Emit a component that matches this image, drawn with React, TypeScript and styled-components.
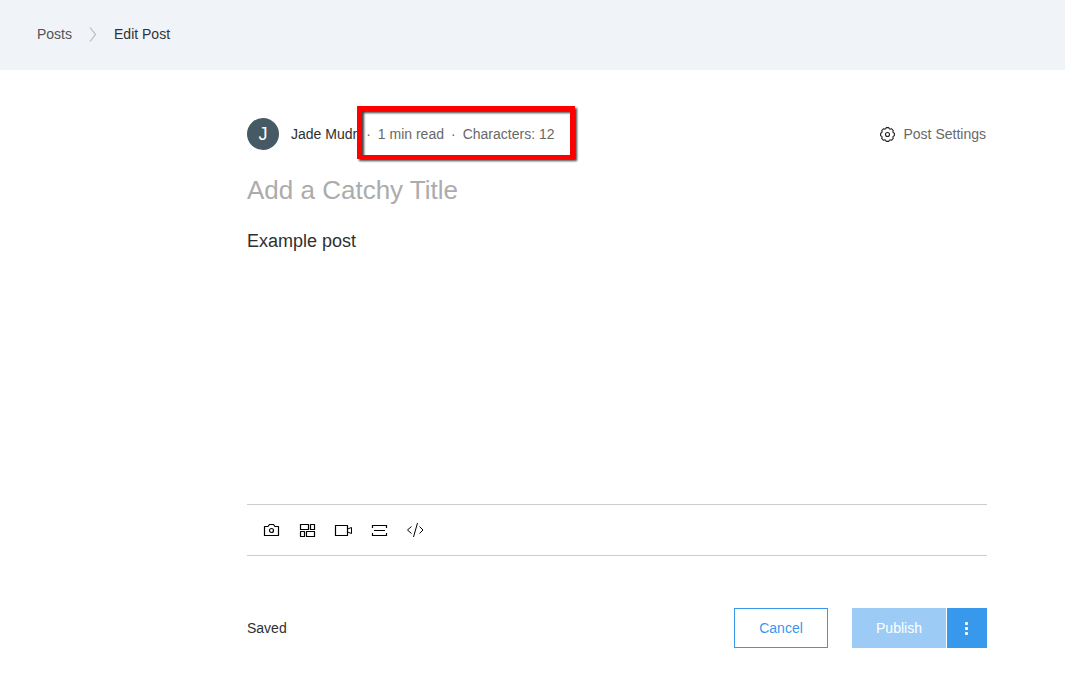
import React, { useState } from "react";
import styled, { createGlobalStyle } from "styled-components";

const GlobalStyle = createGlobalStyle`
  *, *::before, *::after { box-sizing: border-box; }
  body {
    margin: 0;
    background: #ffffff;
    color: #2d3033;
    font-family: "Liberation Sans", Arial, sans-serif;
    font-size: 14px;
    line-height: 20px;
  }
  button, input, textarea { font: inherit; color: inherit; }
`;

const Header = styled.header`
  background: #f0f3f8;
  padding: 24px 37px 26px;
`;

const Crumbs = styled.nav`
  display: flex;
  align-items: center;
  gap: 16px;
`;

const CrumbLink = styled.a`
  color: #505457;
  text-decoration: none;
`;

const CrumbCurrent = styled.span`
  color: #2f3336;
`;

const Main = styled.main`
  padding: 48px 78px 27px 247px;
`;

const Row = styled.div`
  display: flex;
  align-items: center;
  justify-content: space-between;
`;

const Byline = styled.div`
  display: flex;
  align-items: center;
  white-space: nowrap;
`;

const Avatar = styled.span`
  display: flex;
  align-items: center;
  justify-content: center;
  width: 32px;
  height: 32px;
  margin-right: 12px;
  border-radius: 50%;
  background: #455a64;
  color: #ffffff;
  font-size: 18px;
`;

const Author = styled.span`
  margin-right: 9px;
`;

const Stats = styled.div`
  position: relative;
  display: flex;
  gap: 7px;
  color: #686868;

  &::after {
    content: "";
    position: absolute;
    top: -18px;
    right: -21px;
    bottom: -15px;
    left: -9px;
    border: 5px solid #ff0000;
    border-bottom-width: 4px;
    filter: drop-shadow(2px 2px 1px rgba(0, 0, 0, 0.75));
    pointer-events: none;
  }
`;

const TextButton = styled.button`
  display: flex;
  align-items: center;
  gap: 8px;
  padding: 0 1px 0 0;
  border: 0;
  background: none;
  color: #686868;
  cursor: pointer;

  svg { color: #222222; }
`;

const TitleInput = styled.input`
  display: block;
  width: 100%;
  height: 32px;
  margin-top: 24px;
  padding: 0;
  border: 0;
  outline: 0;
  background: none;
  font-size: 26px;
  line-height: 32px;

  &::placeholder { color: #acacac; opacity: 1; }
`;

const BodyInput = styled.textarea`
  display: block;
  width: 100%;
  margin-top: 23px;
  padding: 0;
  border: 0;
  outline: 0;
  resize: none;
  overflow: hidden;
  background: none;
  font-size: 18px;
  line-height: 25px;
`;

const Toolbar = styled.div`
  display: flex;
  padding: 7px 6px;
  border: solid #cccccc;
  border-width: 1px 0;
`;

const ToolButton = styled.button`
  display: flex;
  align-items: center;
  justify-content: center;
  width: 36px;
  height: 36px;
  padding: 0;
  border: 0;
  background: none;
  color: #000000;
  cursor: pointer;
`;

const Footer = styled.footer`
  display: flex;
  align-items: center;
  justify-content: space-between;
  margin-top: 52px;
`;

const Actions = styled.div`
  display: flex;
  gap: 24px;
`;

const SplitButton = styled.div`
  display: flex;
  gap: 1px;
`;

const Button = styled.button<{ $kind: "outline" | "muted" | "solid"; $narrow?: boolean }>`
  display: flex;
  align-items: center;
  justify-content: center;
  width: ${(p) => (p.$narrow ? 40 : 94)}px;
  height: 40px;
  padding: 0;
  border: ${(p) => (p.$kind === "outline" ? "1px solid #3899ec" : "0")};
  background: ${(p) => ({ outline: "#ffffff", muted: "#9cccf6", solid: "#3899ec" })[p.$kind]};
  color: ${(p) => (p.$kind === "outline" ? "#3899ec" : "#ffffff")};
  cursor: pointer;
`;

const Icon = ({ size = 18, children }: { size?: number; children: React.ReactNode }) => (
  <svg width={size} height={size} viewBox={`0 0 ${size} ${size}`} fill="none" stroke="currentColor" aria-hidden="true">
    {children}
  </svg>
);

const tools = [
  {
    label: "Add image",
    art: (
      <>
        <path d="M2.5 14.5V5.5H6L7.5 3.5H11.5L13 5.5H16.5V14.5Z" strokeWidth="1.2" strokeLinejoin="round" />
        <circle cx="9.5" cy="9.5" r="2" strokeWidth="1.2" />
      </>
    ),
  },
  {
    label: "Add gallery",
    art: (
      <path
        d="M2.5 3.5h8v5h-8zM12.5 3.5h4v5h-4zM2.5 10.5h4v5h-4zM8.5 10.5h8v5h-8z"
        strokeWidth="1.2"
        strokeLinejoin="round"
      />
    ),
  },
  {
    label: "Add video",
    art: (
      <>
        <path d="M1.5 4.5h12v10h-12z" strokeWidth="1.2" strokeLinejoin="round" />
        <path d="M13.5 8L17.5 6.5V12.5L13.5 11" />
      </>
    ),
  },
  {
    label: "Add divider",
    art: <path d="M2.5 7V4.5H16.5V7M4 9.5H15M2.5 12V14.5H16.5V12" strokeWidth="1.2" />,
  },
  {
    label: "Add HTML",
    art: <path d="M5.5 5.5L1.5 9L5.5 12.5M11.5 2L7.5 16M13.5 5.5L17 9L13.5 12.5" />,
  },
];

export default function App() {
  const [title, setTitle] = useState("");
  const [body, setBody] = useState("Example post");

  return (
    <>
      <GlobalStyle />
      <Header>
        <Crumbs aria-label="Breadcrumb">
          <CrumbLink href="#posts">Posts</CrumbLink>
          <svg width="10" height="16" viewBox="0 0 10 16" fill="none" stroke="#b8bbbe" strokeWidth="1.2" aria-hidden="true">
            <path d="M2 1.5L7.5 8.5L2 15.5" />
          </svg>
          <CrumbCurrent aria-current="page">Edit Post</CrumbCurrent>
        </Crumbs>
      </Header>
      <Main>
        <Row>
          <Byline>
            <Avatar>J</Avatar>
            <Author>Jade Mudr</Author>
            <Stats>
              <span>·</span>
              <span>1 min read</span>
              <span>·</span>
              <span>Characters: {body.length}</span>
            </Stats>
          </Byline>
          <TextButton type="button">
            <Icon size={16}>
              <path
                d="M14.4 7.2V9.8Q12.1 10.4 13.3 12.4L11.4 14.3Q9.4 13.1 8.8 15.4H6.2Q5.6 13.1 3.6 14.3L1.7 12.4Q2.9 10.4 .6 9.8V7.2Q2.9 6.6 1.7 4.6L3.6 2.7Q5.6 3.9 6.2 1.6H8.8Q9.4 3.9 11.4 2.7L13.3 4.6Q12.1 6.6 14.4 7.2Z"
                strokeWidth="1.1"
                strokeLinejoin="round"
              />
              <circle cx="7.5" cy="8.5" r="2" strokeWidth="1.1" />
            </Icon>
            Post Settings
          </TextButton>
        </Row>
        <TitleInput
          aria-label="Post title"
          placeholder="Add a Catchy Title"
          value={title}
          onChange={(e) => setTitle(e.target.value)}
        />
        <BodyInput
          aria-label="Post content"
          rows={11}
          spellCheck={false}
          value={body}
          onChange={(e) => setBody(e.target.value)}
        />
        <Toolbar role="toolbar" aria-label="Insert">
          {tools.map((t) => (
            <ToolButton key={t.label} type="button" aria-label={t.label}>
              <Icon>{t.art}</Icon>
            </ToolButton>
          ))}
        </Toolbar>
        <Footer>
          <span>Saved</span>
          <Actions>
            <Button type="button" $kind="outline">Cancel</Button>
            <SplitButton>
              <Button type="button" $kind="muted">Publish</Button>
              <Button type="button" $kind="solid" $narrow aria-label="More actions">
                <svg width="4" height="13" viewBox="0 0 4 13" fill="currentColor" aria-hidden="true">
                  <rect width="3" height="3" rx="1" />
                  <rect y="5" width="3" height="3" rx="1" />
                  <rect y="10" width="3" height="3" rx="1" />
                </svg>
              </Button>
            </SplitButton>
          </Actions>
        </Footer>
      </Main>
    </>
  );
}
